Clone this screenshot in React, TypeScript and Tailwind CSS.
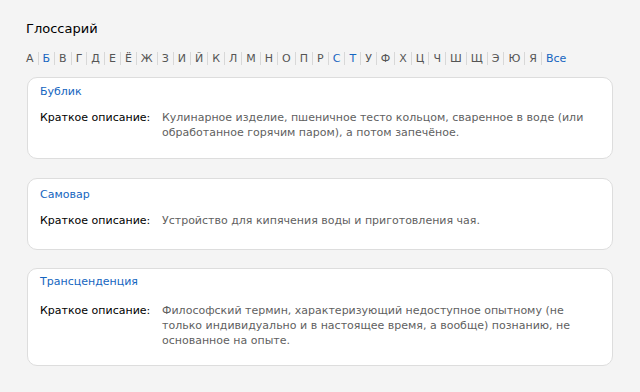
import React from 'react'

const letters = [
  'А', 'Б', 'В', 'Г', 'Д', 'Е', 'Ё', 'Ж', 'З', 'И', 'Й', 'К', 'Л', 'М', 'Н', 'О', 'П', 'Р', 'С', 'Т',
  'У', 'Ф', 'Х', 'Ц', 'Ч', 'Ш', 'Щ', 'Э', 'Ю', 'Я',
]
const active = ['Б', 'С', 'Т']

const terms = [
  {
    title: 'Бублик',
    text: 'Кулинарное изделие, пшеничное тесто кольцом, сваренное в воде (или обработанное горячим паром), а потом запечёное.',
    card: 'pt-[6px] pb-[18px]',
    row: 'mt-[10px]',
  },
  {
    title: 'Самовар',
    text: 'Устройство для кипячения воды и приготовления чая.',
    card: 'mt-[19px] pt-[8px] pb-[21px]',
    row: 'mt-[10px]',
  },
  {
    title: 'Трансценденция',
    text: 'Философский термин, характеризующий недоступное опытному (не только индивидуально и в настоящее время, а вообще) познанию, не основанное на опыте.',
    card: 'mt-[18px] pt-[5px] pb-[17px]',
    row: 'mt-[13px]',
  },
]

export default function App() {
  return (
    <div className="min-h-[392px] bg-[#f4f4f4] px-[26px] pt-[19px] text-[11px] leading-[15px] font-['DejaVu_Sans',Verdana,sans-serif]">
      <h1 className="text-[13px] leading-[20px] text-black">Глоссарий</h1>

      {/* Alphabet */}
      <div className="mt-[13px] flex items-center text-[#555]">
        {letters.map((l, i) => (
          <span
            key={l}
            className={`${i === 0 ? 'pr-[4px]' : 'border-l border-[#d8d8d8] px-[4px]'} leading-[13px] ${
              active.includes(l) ? 'text-[#1565c0]' : ''
            }`}
          >
            {l}
          </span>
        ))}
        <span className="border-l border-[#d8d8d8] px-[4px] leading-[13px] text-[#1565c0]">Все</span>
      </div>

      {/* Terms */}
      <div className="mt-[12px] flex w-[587px] flex-col pl-px">
        {terms.map((t) => (
          <div key={t.title} className={`rounded-[10px] border border-[#dddddd] bg-white px-[12px] ${t.card}`}>
            <div className="text-[#1565c0] leading-[16px]">{t.title}</div>
            <div className={`flex ${t.row}`}>
              <div className="w-[122px] shrink-0 text-black">Краткое описание:</div>
              <div className="text-[#5f5f5f]">{t.text}</div>
            </div>
          </div>
        ))}
      </div>
    </div>
  )
}
